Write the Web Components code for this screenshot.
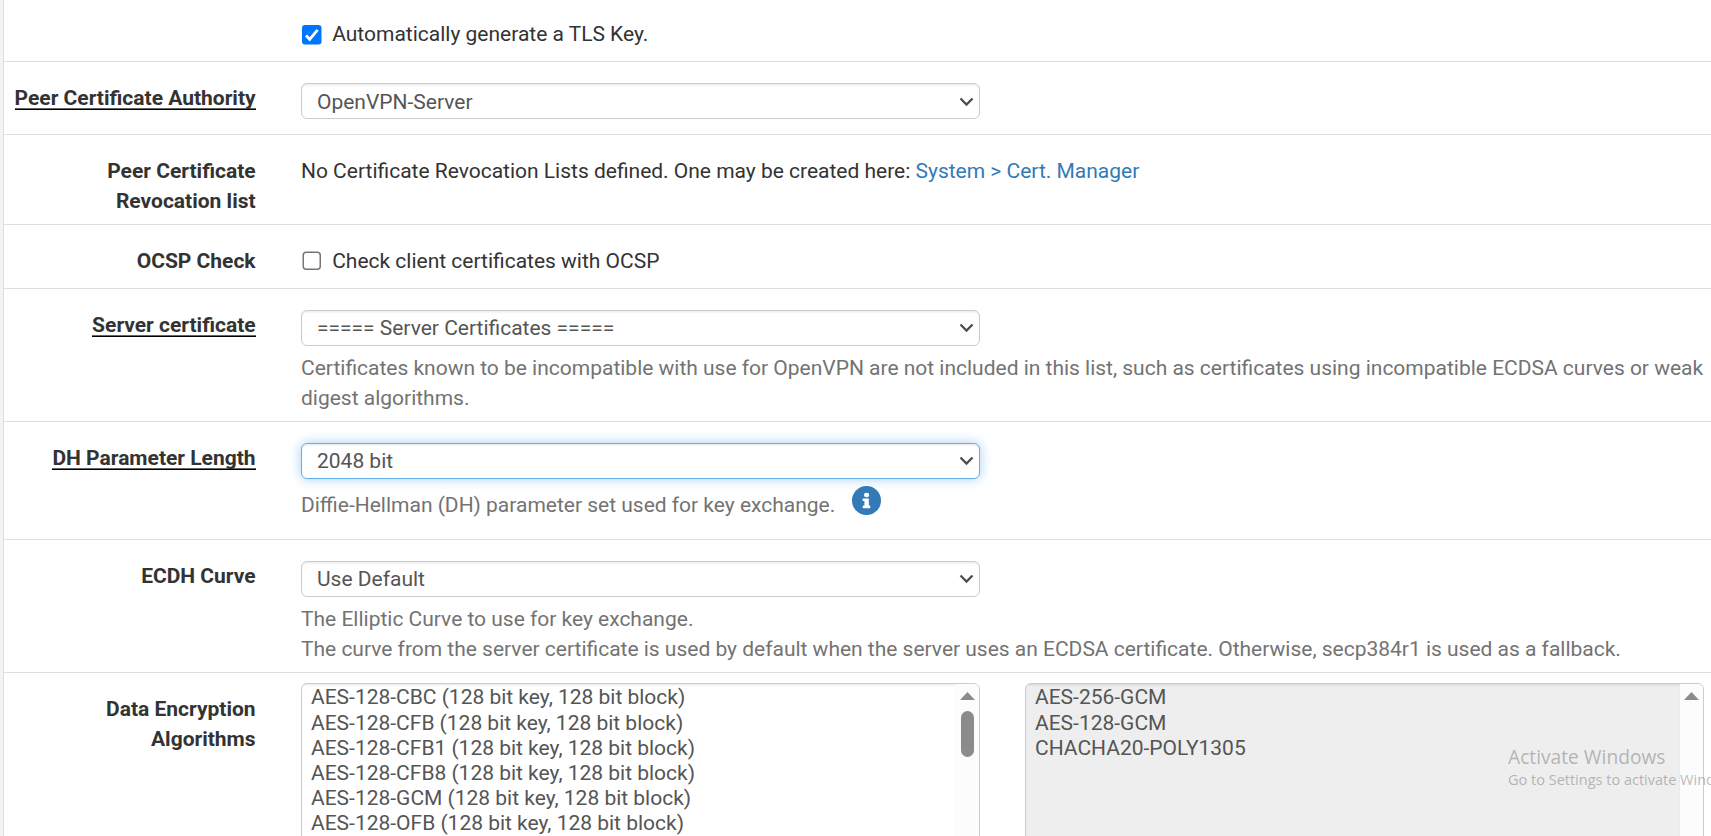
<!DOCTYPE html>
<html lang="en">
<head>
<meta charset="utf-8">
<title>OpenVPN Server</title>
<style>
html,body{margin:0;height:836px;overflow:hidden;background:#f4f4f4}
body{font-family:Roboto,"Liberation Sans",sans-serif;font-size:21px;line-height:30px;color:#333}
</style>
</head>
<body>
<settings-panel></settings-panel>
<script>
function define(name, css, html) {
  customElements.define(name, class extends HTMLElement {
    constructor() {
      super();
      this.attachShadow({mode: 'open'}).innerHTML = '<style>*{box-sizing:border-box}' + css + '</style>' + html;
    }
  });
}

define('form-row', `
:host{display:grid;grid-template-columns:251.6px 1fr;column-gap:45.4px;border-bottom:1px solid #dedede;height:var(--h);box-sizing:border-box}
.label{font-weight:700;text-align:right;padding-top:21px;white-space:nowrap}
.body{padding-top:var(--pt,21px);padding-right:5px;min-width:0;word-spacing:-.05px}
`, `<div class="label"><slot name="label"></slot></div><div class="body"><slot></slot></div>`);

define('required-mark', `
:host{display:inline-block;height:27px;line-height:30px;background:linear-gradient(#666,#666) 0 25px/100% 1px no-repeat,linear-gradient(#000,#000) 0 26px/100% 1px no-repeat}
`, `<slot></slot>`);

define('select-box', `
:host{display:flex;align-items:center;justify-content:space-between;width:679px;height:36px;box-sizing:border-box;border:1px solid #ccc;border-radius:6px;padding:var(--nudge,0px) 4.5px 0 15px;background:#fff;color:#555;box-shadow:inset 0 1.5px 1.5px rgba(0,0,0,.075)}
:host([focused]){border-color:#66afe9;box-shadow:inset 0 1.5px 1.5px rgba(0,0,0,.075),0 0 12px rgba(102,175,233,.6)}
svg{display:block}
`, `<span><slot></slot></span><svg width="15" height="10" viewBox="0 0 15 10"><path d="M1.5 1.5 7.5 7.5 13.5 1.5" fill="none" stroke="#4d4d4d" stroke-width="2.3"/></svg>`);

define('check-box', `
:host{display:flex;align-items:center;gap:10.2px}
svg{display:block}
.on,:host([checked]) .off{display:none}
:host([checked]) .on{display:block}
svg{margin:0 0 0 1px}
:host([checked]) svg{margin-top:2px}
`, `<svg width="20" height="20" viewBox="0 0 20 20"><rect class="off" x="1.25" y="1.25" width="17" height="17" rx="3" fill="#fff" stroke="#767676" stroke-width="1.5"/><g class="on"><rect x="0" y="0" width="19.5" height="19.5" rx="3" fill="#0075ff"/><path d="M4 10.5 7.7 14.3 15.6 4.8" fill="none" stroke="#fff" stroke-width="2.8"/></g></svg><span><slot></slot></span>`);

define('help-text', `:host{display:block;color:#737373;margin-top:var(--mt,7px)}`, `<slot></slot>`);

define('text-link', `:host{color:#337ab7}`, `<slot></slot>`);

define('info-icon', `:host{display:inline-block;vertical-align:top;width:29px;height:29px;margin:-4px 0 0 11.7px}svg{display:block}`,
`<svg width="29" height="29" viewBox="0 0 29 29"><circle cx="14.5" cy="14.5" r="14.5" fill="#337ab7"/><path d="M12 9a2.3 2.3 0 0 1 2.3-2.3h.6a2.2 2.2 0 0 1 0 4.5h-.6A2.3 2.3 0 0 1 12 9zM11.2 12.4h5.6v7.2h.9q.6 0 .6.6v1.4q0 .6-.6.6h-6.4q-.6 0-.6-.6v-1.4q0-.6.6-.6h1.1v-4.5h-1.2q-.6 0-.6-.6v-1.5q0-.6.6-.6z" fill="#fff"/></svg>`);

define('list-box', `
:host{display:flex;width:679px;height:300px;box-sizing:border-box;border:1px solid #ccc;border-radius:6px;overflow:hidden;background:#fff;color:#555;line-height:25px}
:host([muted]){background:#eee}
.items{flex:1;padding:1px 0 0 9px;box-shadow:inset 0 1.5px 1.5px rgba(0,0,0,.075)}
::slotted(list-item:first-child){margin-bottom:1px}
.bar{width:23px;background:#fcfcfc;display:flex;flex-direction:column;align-items:center;padding-top:8px}
.thumb{width:13px;height:46px;border-radius:7px;background:#8b8b8b;margin-top:11px}
:host([muted]) .thumb{display:none}
`, `<div class="items"><slot></slot></div><div class="bar"><svg width="15" height="8" viewBox="0 0 15 8"><path d="M7.5 0 15 8H0z" fill="#8b8b8b"/></svg><div class="thumb"></div></div>`);

define('list-item', `:host{display:block;height:25px;white-space:nowrap}`, `<slot></slot>`);

define('system-watermark', `
:host{display:block;position:absolute;left:1504px;top:743px;width:203px;overflow:hidden;white-space:nowrap;color:rgba(120,120,120,.5);font-family:"Open Sans","Noto Sans",sans-serif}
.a{font-size:19.2px;line-height:28px}.b{font-size:14.5px;line-height:18px}
`, `<div class="a">Activate Windows</div><div class="b">Go to Settings to activate Windows.</div>`);

define('settings-panel', `
:host{display:block;height:836px;overflow:hidden;margin-left:3px;border-left:1px solid #dcdcdc;background:#fff;position:relative}
.pair{display:flex;gap:45px}
`, `
<form-row style="--h:62px;--pt:19px"><check-box checked>Automatically generate a TLS Key.</check-box></form-row>
<form-row style="--h:73px"><required-mark slot="label">Peer Certificate Authority</required-mark><select-box style="--nudge:1px">OpenVPN-Server</select-box></form-row>
<form-row style="--h:90px"><span slot="label">Peer Certificate<br>Revocation list</span>No Certificate Revocation Lists defined. One may be created here: <text-link>System &gt; Cert. Manager</text-link></form-row>
<form-row style="--h:64px"><span slot="label">OCSP Check</span><check-box>Check client certificates with OCSP</check-box></form-row>
<form-row style="--h:133px"><required-mark slot="label">Server certificate</required-mark><select-box>===== Server Certificates =====</select-box><help-text>Certificates known to be incompatible with use for OpenVPN are not included in this list, such as certificates using incompatible ECDSA curves or weak digest algorithms.</help-text></form-row>
<form-row style="--h:118px"><required-mark slot="label">DH Parameter Length</required-mark><select-box focused>2048 bit</select-box><help-text style="--mt:11px">Diffie-Hellman (DH) parameter set used for key exchange. <info-icon></info-icon></help-text></form-row>
<form-row style="--h:133px"><span slot="label">ECDH Curve</span><select-box>Use Default</select-box><help-text>The Elliptic Curve to use for key exchange.<br>The curve from the server certificate is used by default when the server uses an ECDSA certificate. Otherwise, secp384r1 is used as a fallback.</help-text></form-row>
<form-row style="--h:330px;--pt:10px"><span slot="label">Data Encryption<br>Algorithms</span><div class="pair"><list-box><list-item>AES-128-CBC (128 bit key, 128 bit block)</list-item><list-item>AES-128-CFB (128 bit key, 128 bit block)</list-item><list-item>AES-128-CFB1 (128 bit key, 128 bit block)</list-item><list-item>AES-128-CFB8 (128 bit key, 128 bit block)</list-item><list-item>AES-128-GCM (128 bit key, 128 bit block)</list-item><list-item>AES-128-OFB (128 bit key, 128 bit block)</list-item></list-box><list-box muted><list-item>AES-256-GCM</list-item><list-item>AES-128-GCM</list-item><list-item>CHACHA20-POLY1305</list-item></list-box></div></form-row>
<system-watermark></system-watermark>
`);
</script>
</body>
</html>
